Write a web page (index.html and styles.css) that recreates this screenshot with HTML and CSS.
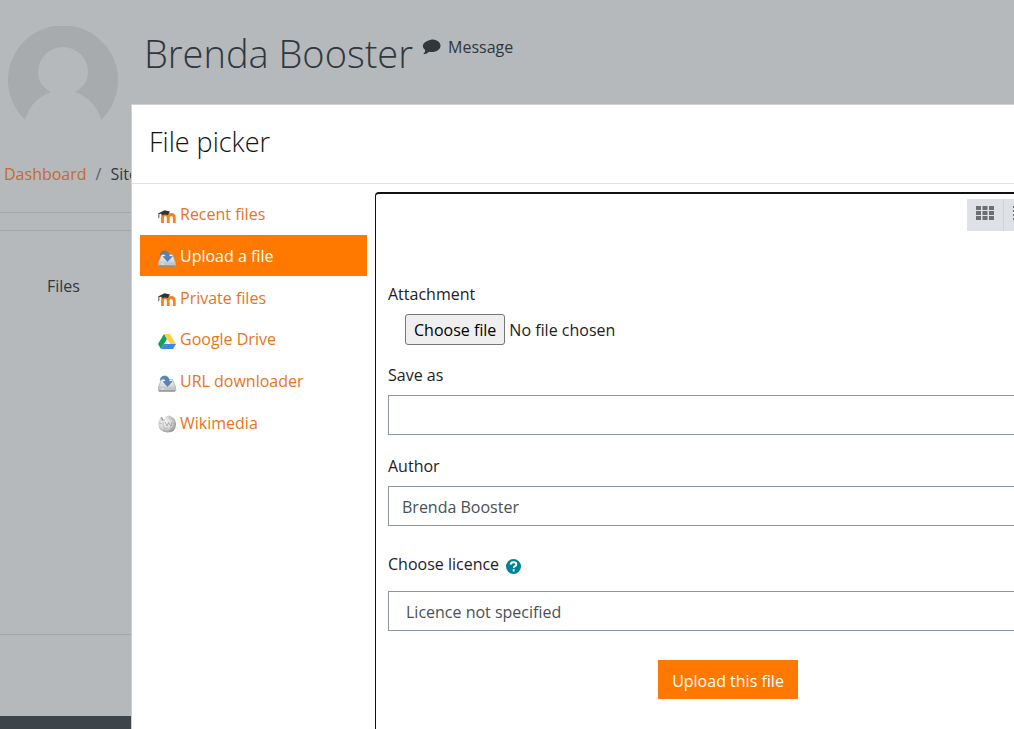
FILE: index.html
```html
<!DOCTYPE html>
<html lang="en">
<head>
<meta charset="utf-8">
<title>File picker</title>
<link rel="stylesheet" href="styles.css">
</head>
<body>
<svg width="0" height="0" class="defs" aria-hidden="true">
  <defs>
    <linearGradient id="drive" x1="0" y1="0" x2="0" y2="1"><stop offset="0" stop-color="#fafafa"/><stop offset="1" stop-color="#b4b8bd"/></linearGradient>
    <radialGradient id="ball" cx=".4" cy=".4" r=".65"><stop offset="0" stop-color="#f4f4f4"/><stop offset=".6" stop-color="#d6d6d6"/><stop offset="1" stop-color="#8c8c8c"/></radialGradient>
    <symbol id="moodle" viewBox="0 0 18 18">
      <path d="M4.500 16V10.500q0-3 2.900-3 2.800 0 2.800 3V16M10.200 16v-5.500q0-3 3-3 3.100 0 3.100 3V16" fill="none" stroke="#f58220" stroke-width="2.800"/>
      <path d="M0 6.500 6.500 3.200 12 4.600 9.800 8.200Q6.500 6.700 3.700 8.800L3.500 6.700 1.300 7V10.500L.4 11.500.5 7Z" fill="#333"/>
    </symbol>
    <symbol id="download" viewBox="0 0 18 18">
      <path d="M3.500 5.500h11L17.600 13v3.500q0 .8-.8.8H1.200q-.8 0-.8-.8V13Z" fill="url(#drive)" stroke="#9498a0" stroke-width=".6"/>
      <path d="M.6 13.300h16.800v3.400H.6Z" fill="#c3c6ca"/><path d="M1 16.900h16" stroke="#777" stroke-width=".8"/>
      <path d="M2.300 6.500Q2.500 1.800 7 2q4.200.2 4.300 5.500h3L9.500 12.500 5 7.500h2.600Q7.400 4.600 5.300 4.500 3.500 4.500 2.300 6.500Z" fill="#5583bb" stroke="#3b6ba5" stroke-width=".5"/>
      <path d="M3 15h3" stroke="#f5f5f5" stroke-width=".8"/>
    </symbol>
    <symbol id="gdrive" viewBox="0 0 18 18">
      <path d="M6 2 9 7 3 17 0 12Z" fill="#119f5b"/><path d="M6 2h6l6 10h-6Z" fill="#ffd04b"/><path d="M6 12h12l-3 5H3Z" fill="#4284ed"/>
    </symbol>
    <symbol id="wiki" viewBox="0 0 18 18">
      <path d="M1.500 4.500 3 2.500 4.500 2 4.800 4.200 7 3.800 7.500 1.500 11 .5 15 2.500Q18 5 18 9.500 17.500 17.500 9.500 17.500 1 17 .3 9.500 0 6.500 1.500 4.500Z" fill="url(#ball)"/>
      <path d="M2.500 2.500 4 4.500 4 6l3-1M1 8l4 1 1-2M11 1l1 3 4 .500M5 9l1 4 4 0M14 8l3.500 1M6 13l1 4M12 12l2 3" fill="none" stroke="#a2a2a2" stroke-width=".5"/>
      <path d="M3.500 2.500 5 5" stroke="#666" stroke-width=".8"/>
      <path d="m7 7 2 4 1.500-3.500L13 11l1-4" fill="none" stroke="#888" stroke-width=".6"/>
    </symbol>
  </defs>
</svg>
<div class="page">
  <header class="profile">
    <svg class="avatar" viewBox="0 0 110 110" role="img" aria-label="Profile picture"><path d="M17 94A55 55 0 1 1 93 94Q87 73 67 66Q80 59 80 46A25 25 0 0 0 30 46Q30 59 43 66Q23 73 17 94Z"/></svg>
    <h1>Brenda Booster</h1>
    <a class="message" href="#message"><svg viewBox="0 0 18 16" aria-hidden="true"><path d="M9.200.500C14.200.500 18 3 18 6.700S14.200 13 9.200 13q-1.400 0-2.600-.2Q4.500 15 1.300 15.300q-.5-.2-.1-.7Q2.700 13 2.800 11.300.300 9.500.300 6.700.300 3 9.200.500Z"/></svg>Message</a>
  </header>
  <nav class="crumbs" aria-label="Breadcrumb"><a href="#dashboard">Dashboard</a><span class="slash">/</span><span>Site</span></nav>
  <div class="rule"></div>
  <main class="content"><span>Files</span></main>
  <div class="bottom"></div>
  <footer class="footer"></footer>
</div>
<section class="modal" role="dialog" aria-labelledby="picker-title">
  <header class="modal-head"><h2 id="picker-title">File picker</h2></header>
  <div class="modal-body">
    <nav class="repos" aria-label="Repositories">
      <a href="#recent"><svg aria-hidden="true"><use href="#moodle"/></svg>Recent files</a>
      <a href="#upload" class="active" aria-current="page"><svg aria-hidden="true"><use href="#download"/></svg>Upload a file</a>
      <a href="#private"><svg aria-hidden="true"><use href="#moodle"/></svg>Private files</a>
      <a href="#drive"><svg aria-hidden="true"><use href="#gdrive"/></svg>Google Drive</a>
      <a href="#url"><svg aria-hidden="true"><use href="#download"/></svg>URL downloader</a>
      <a href="#wikimedia"><svg aria-hidden="true"><use href="#wiki"/></svg>Wikimedia</a>
    </nav>
    <div class="panel">
      <div class="views">
        <button type="button" aria-label="Icons view"><svg viewBox="0 0 18 16" aria-hidden="true"><path d="M0 1h5v4H0ZM6.500 1h5v4h-5ZM13 1h5v4h-5ZM0 6h5v4H0ZM6.500 6h5v4h-5ZM13 6h5v4h-5ZM0 11h5v4H0ZM6.500 11h5v4h-5ZM13 11h5v4h-5Z"/></svg></button>
        <button type="button" aria-label="List view"><svg viewBox="0 0 18 16" aria-hidden="true"><path d="M0 1h3v2H0ZM0 5h3v2H0ZM0 9h3v2H0ZM0 13h3v2H0ZM5 1h13v2H5ZM5 5h13v2H5ZM5 9h13v2H5ZM5 13h13v2H5Z"/></svg></button>
      </div>
      <form class="form">
        <label class="caption" for="file">Attachment</label>
        <div class="file-row"><input type="file" id="file" class="file-input"><label for="file" class="file-button">Choose file</label><span>No file chosen</span></div>
        <label class="caption" for="save">Save as</label>
        <input class="field" type="text" id="save">
        <label class="caption" for="author">Author</label>
        <input class="field" type="text" id="author" value="Brenda Booster">
        <div class="licence"><label for="licence">Choose licence</label><button type="button" class="help" aria-label="Help"><svg viewBox="0 0 16 16" aria-hidden="true"><circle cx="8" cy="8" r="8"/><path d="M5 6Q5.200 3.500 8 3.500q3 0 3 2.300 0 1.200-1.400 1.900-1.300.6-1.300 1.800M8.200 11v2.200"/></svg></button></div>
        <select class="field select" id="licence"><option>Licence not specified</option></select>
        <button type="button" class="submit">Upload this file</button>
      </form>
    </div>
  </div>
</section>
</body>
</html>
```
FILE: styles.css
```css
* { box-sizing: border-box; }
body {
  margin: 0;
  height: 100vh;
  overflow: hidden;
  position: relative;
  background: #b5b9bc;
  color: #30373d;
  font: 380 16px/24px "Open Sans", "Noto Sans", sans-serif;
}
button, input, select { font: inherit; }
a { color: #c66a2c; text-decoration: none; }
.defs { position: absolute; }
.page { height: 100vh; display: flex; flex-direction: column; }
.profile { display: flex; align-items: flex-start; padding: 26px 8px 0; height: 162px; flex: none; }
.avatar { width: 110px; height: 110px; fill: #a7abae; }
h1 { margin: 0 0 0 26px; font-size: 38px; line-height: 54px; font-weight: 300; }
.message { display: flex; align-items: center; gap: 7px; margin: 9px 0 0 9px; color: #30373d; }
.message svg { width: 19px; height: 16px; fill: #30373d; }
.crumbs { padding-left: 4px; flex: none; white-space: nowrap; }
.slash { margin: 0 9px; color: #596066; }
.rule { height: 19px; margin-top: 26px; flex: none; border: 1px solid #a2a6a9; border-width: 1px 0; }
.content { padding: 43px 47px; flex: 1; }
.bottom { height: 82px; flex: none; border-top: 1px solid #a2a6a9; }
.footer { height: 13px; flex: none; background: #3d444a; }

.modal {
  position: absolute;
  inset: 104px -64px 0 131px;
  display: flex;
  flex-direction: column;
  background: #fff;
  border: 1px solid #cfd1d2;
  border-bottom: 0;
  color: #1d2125;
}
.modal-head { padding: 16px 17px 21px; border-bottom: 1px solid #dee2e6; }
h2 { margin: 0; color: #111; font-size: 27px; line-height: 41px; font-weight: 300; }
.modal-body { display: flex; flex: 1; padding: 8px 0 0 8px; }
.repos { width: 227px; height: 250px; margin: 1px 8px 0 0; flex: none; display: flex; flex-direction: column; }
.repos a { flex: 1; display: flex; align-items: center; gap: 4px; padding: 1px 0 0 18px; color: #e8731f; }
.repos svg { width: 18px; height: 18px; margin-top: 3px; }
.repos .active { background: #ff7800; color: #fff; }
.panel { flex: 1; min-width: 0; border: 1px solid #111; border-width: 2px 0 0 1px; border-radius: 4px 0 0; padding: 5px 0 0 12px; }
.views { display: flex; justify-content: flex-end; padding-right: 38px; }
.views button { width: 36px; height: 32px; padding: 0; border: 0; background: #dee2e6; display: grid; place-items: center; }
.views button + button { border-left: 1px solid #ced4da; }
.views svg { width: 18px; height: 16px; margin-bottom: 4px; fill: #6c7075; }
.form { display: flex; flex-direction: column; padding-top: 51px; margin-right: 9px; }
.caption { align-self: flex-start; }
.file-row { position: relative; display: flex; align-items: center; gap: 4px; margin: 8px 0 18px 17px; }
.file-input { position: absolute; width: 1px; height: 1px; opacity: 0; }
.file-button { height: 31px; padding: 0 8px; line-height: 30px; border: 1px solid #767676; border-radius: 3px; background: #efefef; color: #000; }
.field { width: 100%; height: 40px; margin: 8px 0 19px; padding: 1px 13px 0; border: 1px solid #8f959e; border-radius: 0; background: #fff; color: #495057; }
.licence { display: flex; align-items: center; gap: 7px; margin-top: 7px; }
.help { width: 15px; height: 15px; margin-top: 4px; padding: 0; border: 0; background: none; }
.help svg { display: block; width: 15px; height: 15px; fill: #008196; }
.help path { fill: none; stroke: #fff; stroke-width: 2; }
.select { appearance: none; margin: 15px 0 0; padding-left: 17px; }
.submit { align-self: center; height: 39px; margin-top: 29px; padding: 2px 14px 0; border: 0; background: #ff7800; color: #fff; }
```
